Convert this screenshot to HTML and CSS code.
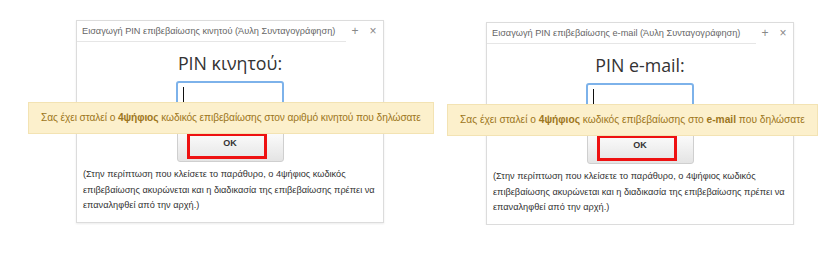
FILE: index.html
```html
<!DOCTYPE html>
<html lang="el">

<head>
  <meta charset="utf-8" />
  <title>Εισαγωγή PIN επιβεβαίωσης</title>
  <link rel="stylesheet" href="styles.css">
</head>

<body class="pin_page">
  <div class="pin_page_row">

    <!-- PIN κινητού -->
    <div class="pin_dialog">
      <div class="pin_dialog_head">
        <span class="pin_dialog_head_title">Εισαγωγή PIN επιβεβαίωσης κινητού (Άυλη Συνταγογράφηση)</span>
        <span class="pin_dialog_head_icon">+</span>
        <span class="pin_dialog_head_icon">×</span>
      </div>
      <div class="pin_dialog_body">
        <h1 class="pin_dialog_title">PIN κινητού:</h1>
        <div class="pin_input"><span class="pin_input_caret"></span></div>
        <div class="pin_button_wrap">
          <button class="pin_button">OK</button>
          <div class="mark_box"></div>
        </div>
        <p class="pin_note">(Στην περίπτωση που κλείσετε το παράθυρο, ο 4ψήφιος κωδικός επιβεβαίωσης ακυρώνεται και η διαδικασία της επιβεβαίωσης πρέπει να επαναληφθεί από την αρχή.)</p>
      </div>
      <div class="pin_toast pin_toast_sms">Σας έχει σταλεί ο <b>4ψήφιος</b> κωδικός επιβεβαίωσης στον αριθμό κινητού που δηλώσατε</div>
    </div>

    <!-- PIN e-mail -->
    <div class="pin_dialog pin_dialog_mail">
      <div class="pin_dialog_head">
        <span class="pin_dialog_head_title">Εισαγωγή PIN επιβεβαίωσης e-mail (Άυλη Συνταγογράφηση)</span>
        <span class="pin_dialog_head_icon">+</span>
        <span class="pin_dialog_head_icon">×</span>
      </div>
      <div class="pin_dialog_body">
        <h1 class="pin_dialog_title">PIN e-mail:</h1>
        <div class="pin_input"><span class="pin_input_caret"></span></div>
        <div class="pin_button_wrap">
          <button class="pin_button">OK</button>
          <div class="mark_box"></div>
        </div>
        <p class="pin_note">(Στην περίπτωση που κλείσετε το παράθυρο, ο 4ψήφιος κωδικός επιβεβαίωσης ακυρώνεται και η διαδικασία της επιβεβαίωσης πρέπει να επαναληφθεί από την αρχή.)</p>
      </div>
      <div class="pin_toast pin_toast_mail">Σας έχει σταλεί ο <b>4ψήφιος</b> κωδικός επιβεβαίωσης στο <b>e-mail</b> που δηλώσατε</div>
    </div>

  </div>
</body>

</html>
```

FILE: styles.css
```css
body {
  margin: 0;
  background-color: #ffffff;
  font-family: "Liberation Sans", Arial, "Noto Sans", sans-serif;
  color: #333;
}

.pin_page_row {
  display: flex;
  align-items: flex-start;
  gap: 102px;
  padding-top: 20px;
  padding-left: 76px;
}

.pin_dialog {
  position: relative;
  width: 308px;
  box-sizing: border-box;
  border: 1px solid #dcdcdc;
  box-shadow: 0 1px 2px rgba(0, 0, 0, 0.08);
  background-color: #fff;
}

.pin_dialog_mail {
  margin-top: 2px;
}

.pin_dialog_head {
  display: flex;
  align-items: center;
  height: 20px;
}

.pin_dialog_head_title {
  width: 264px;
  height: 20px;
  line-height: 20px;
  padding-left: 5px;
  border-bottom: 1px solid #e6e6e6;
  font-size: 9.2px;
  color: #666;
  white-space: nowrap;
}

.pin_dialog_head_icon {
  width: 18px;
  text-align: center;
  font-size: 12px;
  color: #888;
}

.pin_dialog_body {
  display: flex;
  flex-direction: column;
  align-items: center;
  padding: 0 6px 8px 6px;
}

.pin_dialog_title {
  margin: 9px 0 0 0;
  font-family: "Open Sans", "Noto Sans", sans-serif;
  font-size: 17.8px;
  font-weight: normal;
  line-height: 26px;
  color: #333;
}

.pin_input {
  width: 108px;
  height: 28px;
  margin-top: 5px;
  box-sizing: border-box;
  border: 2px solid #7db2ea;
  border-radius: 3px;
  padding: 4px 0 0 5px;
}

.pin_input_caret {
  display: block;
  width: 1px;
  height: 17px;
  background-color: #111;
}

.pin_button_wrap {
  position: relative;
  margin-top: 21px;
}

.pin_button {
  display: block;
  width: 107px;
  height: 32px;
  border: 1px solid #cfcfcf;
  border-radius: 3px;
  background: linear-gradient(#fdfdfd, #e4e4e4);
  font-family: "Liberation Sans", Arial, sans-serif;
  font-size: 9px;
  font-weight: bold;
  color: #333;
  padding-bottom: 8px;
}

.mark_box {
  position: absolute;
  left: 10px;
  top: 3px;
  width: 80px;
  height: 26px;
  box-sizing: border-box;
  border: 3px solid #ee1111;
}

.pin_note {
  margin: 5px 0 0 0;
  align-self: stretch;
  font-size: 9.2px;
  line-height: 15.5px;
  color: #333;
}

.pin_toast {
  position: absolute;
  top: 81px;
  height: 30px;
  line-height: 30px;
  padding: 0 12px;
  white-space: nowrap;
  background-color: #fcf0cc;
  border: 1px solid #f3e3b3;
  font-size: 10.2px;
  color: #9c7620;
}

.pin_toast b {
  font-weight: bold;
}

.pin_toast_sms {
  left: -49px;
  letter-spacing: -0.1px;
}

.pin_toast_mail {
  left: -40px;
}
```
